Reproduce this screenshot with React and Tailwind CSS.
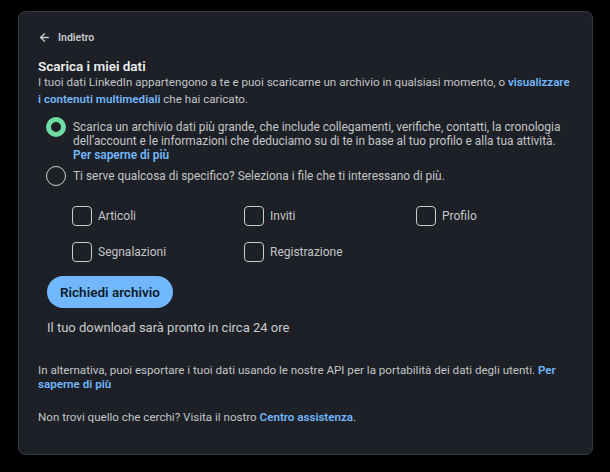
import { ArrowLeft } from 'lucide-react';

const fileOptions = [
  ['Articoli', 'Inviti', 'Profilo'],
  ['Segnalazioni', 'Registrazione'],
];

function Radio({ checked }) {
  if (checked) {
    return <span className="mt-[-3px] block h-5 w-5 shrink-0 rounded-full border-[5px] border-[#6fdba5] bg-[#1d2026]" />;
  }
  return <span className="block h-5 w-5 shrink-0 rounded-full border-[1.5px] border-[#d0d2d5]" />;
}

function Checkbox({ label }) {
  return (
    <div className="flex items-center gap-[6px]">
      <span className="block h-5 w-5 rounded-[4px] border-[1.5px] border-[#c9cbce]" />
      <span className="text-[12px] text-[#c3c5c8]">{label}</span>
    </div>
  );
}

export default function App() {
  return (
    <div className="min-h-[472px] bg-black pt-[11px] pl-[18px]" style={{ fontFamily: 'Roboto, "Liberation Sans", sans-serif' }}>
      <div className="h-[444px] w-[575px] rounded-[7px] border border-[#34373d] bg-[#1d2026] px-[19px] pt-[18px]">
        <div className="flex items-center gap-[7px] text-[#c6c8cb]">
          <ArrowLeft size={13} strokeWidth={2.5} />
          <span className="text-[10.5px] font-semibold">Indietro</span>
        </div>

        <h1 className="mt-[11px] text-[13.5px] leading-[18px] font-semibold text-[#eceef0]">Scarica i miei dati</h1>
        <p className="mt-[-1px] text-[11.6px] leading-[17px] text-[#c3c5c8]">
          I tuoi dati LinkedIn appartengono a te e puoi scaricarne un archivio in qualsiasi momento, o{' '}
          <span className="font-semibold text-[#71b7fb]">visualizzare i contenuti multimediali</span> che hai caricato.
        </p>

        <div className="mt-[12px] flex flex-col gap-[4px] pl-[8px]">
          <div className="flex gap-[7px]">
            <Radio checked />
            <p className="text-[11.9px] leading-[14px] text-[#c3c5c8]">
              Scarica un archivio dati più grande, che include collegamenti, verifiche, contatti, la cronologia
              dell’account e le informazioni che deduciamo su di te in base al tuo profilo e alla tua attività.
              <span className="block font-semibold text-[#71b7fb]">Per saperne di più</span>
            </p>
          </div>
          <div className="flex items-center gap-[7px]">
            <Radio />
            <p className="text-[11.9px] leading-[14px] text-[#c3c5c8]">
              Ti serve qualcosa di specifico? Seleziona i file che ti interessano di più.
            </p>
          </div>
        </div>

        <div className="mt-[20px] flex flex-col gap-[16px] pl-[34px]">
          {fileOptions.map((row, i) => (
            <div key={i} className="grid grid-cols-[172px_172px_172px]">
              {row.map(label => (
                <Checkbox key={label} label={label} />
              ))}
            </div>
          ))}
        </div>

        <div className="mt-[14px] pl-[9px]">
          <button className="h-[32px] rounded-full bg-[#71b7fb] px-[13px] text-[13.5px] font-semibold text-[#0c1a2b]">
            Richiedi archivio
          </button>
          <p className="mt-[11px] text-[13px] leading-[18px] text-[#c9cbce]">Il tuo download sarà pronto in circa 24 ore</p>
        </div>

        <p className="mt-[26px] text-[11.6px] leading-[14px] text-[#c3c5c8]">
          In alternativa, puoi esportare i tuoi dati usando le nostre API per la portabilità dei dati degli utenti.{' '}
          <span className="font-semibold text-[#71b7fb]">Per saperne di più</span>
        </p>
        <p className="mt-[19px] text-[11.6px] leading-[14px] text-[#c3c5c8]">
          Non trovi quello che cerchi? Visita il nostro <span className="font-semibold text-[#71b7fb]">Centro assistenza</span>.
        </p>
      </div>
    </div>
  );
}
